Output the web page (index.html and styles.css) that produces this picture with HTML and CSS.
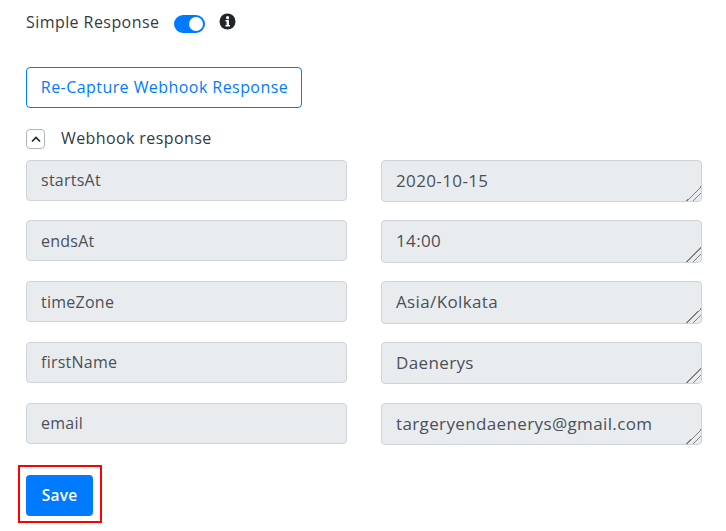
FILE: index.html
```html
<!DOCTYPE html>
<html lang="en">
<head>
<meta charset="utf-8">
<title>Webhook response</title>
<link rel="stylesheet" href="styles.css">
</head>
<body>
<div class="page">
  <div class="simple-row">
    <span class="simple-label">Simple Response</span>
    <span class="toggle"><span class="knob"></span></span>
    <svg class="info" width="17" height="17" viewBox="0 0 17 17"><circle cx="8.5" cy="8.5" r="8" fill="#212529"/><circle cx="8.6" cy="4.7" r="1.6" fill="#fff"/><path d="M6.5 7h3.4v5h1.1v1.6H6.4V12h1.2V8.6H6.5z" fill="#fff"/></svg>
  </div>
  <button class="recapture" type="button">Re-Capture Webhook Response</button>
  <div class="collapse-row">
    <span class="collapse-btn"><svg width="10" height="7" viewBox="0 0 10 7"><path d="M1 5.5 5 1.5l4 4" fill="none" stroke="#212529" stroke-width="1.7"/></svg></span>
    <span class="collapse-label">Webhook response</span>
  </div>
  <div class="fields">
    <input class="field" disabled value="startsAt"><textarea class="field area" disabled>2020-10-15</textarea>
    <input class="field" disabled value="endsAt"><textarea class="field area" disabled>14:00</textarea>
    <input class="field" disabled value="timeZone"><textarea class="field area" disabled>Asia/Kolkata</textarea>
    <input class="field" disabled value="firstName"><textarea class="field area" disabled>Daenerys</textarea>
    <input class="field" disabled value="email"><textarea class="field area" disabled>targeryendaenerys@gmail.com</textarea>
  </div>
  <div class="save-highlight"><button class="save" type="button">Save</button></div>
</div>
</body>
</html>
```

FILE: styles.css
```css
* { box-sizing: border-box; }
html, body { margin: 0; padding: 0; background: #fff; }
body { font-family: "Open Sans", "Noto Sans", sans-serif; color: #212529; overflow: hidden; }
.page { width: 726px; height: 531px; padding: 12px 24px 0 26px; }
.simple-row { display: flex; align-items: flex-start; height: 22px; }
.simple-label { font-size: 16px; letter-spacing: .43px; line-height: 21px; width: 148px; color: #343a40; }
.toggle { width: 31px; height: 18px; margin-top: 3px; border-radius: 9px; background: #007bff; position: relative; flex: none; }
.knob { position: absolute; right: 2px; top: 2px; width: 14px; height: 14px; border-radius: 50%; background: #fff; }
.info { margin-left: 14px; margin-top: 1px; flex: none; }
.recapture { display: block; margin-top: 33px; width: 276px; height: 41px; padding: 0 0 2px 1px; background: #fff; border: 1px solid #007bff; border-radius: 4px; color: #007bff; font: 16px "Open Sans", "Noto Sans", sans-serif; letter-spacing: .44px; }
.collapse-row { display: flex; align-items: center; margin-top: 20px; height: 22px; }
.collapse-btn { width: 19px; height: 20px; border: 1px solid #adb5bd; border-radius: 4px; display: flex; align-items: center; justify-content: center; flex: none; }
.collapse-label { margin-left: 16px; margin-top: -2px; font-size: 16px; letter-spacing: .4px; color: #343a40; }
.fields { display: grid; grid-template-columns: 321px 321px; column-gap: 34px; row-gap: 18.4px; margin-top: 9.6px; align-items: start; }
.field { display: block; width: 100%; height: 41px; padding: 6px 14px 6px; margin: 0; background: #e9ecef; border: 1px solid #ced4da; border-radius: 4px; color: #495057; font: 16px/24px "Open Sans", "Noto Sans", sans-serif; letter-spacing: .25px; opacity: 1; -webkit-text-fill-color: #495057; }
.area { height: 42.4px; font-size: 17px; letter-spacing: .37px; line-height: 28px; padding: 6px 14px 0; resize: both; overflow: hidden; }
.area::-webkit-resizer { background: linear-gradient(135deg, transparent 50%, #808080 50%, #808080 54%, transparent 54%, transparent 72%, #808080 72%, #808080 76%, transparent 76%); }
.save-highlight { margin-top: 19.6px; margin-left: -8px; width: 84px; height: 58px; border: 2px solid #ff0000; padding: 8px 6px; }
.save { display: block; width: 67px; height: 41px; padding: 0; background: #007bff; border: 0; border-radius: 4px; color: #fff; font: 600 15.5px "Open Sans", "Noto Sans", sans-serif; letter-spacing: .2px; }
```
